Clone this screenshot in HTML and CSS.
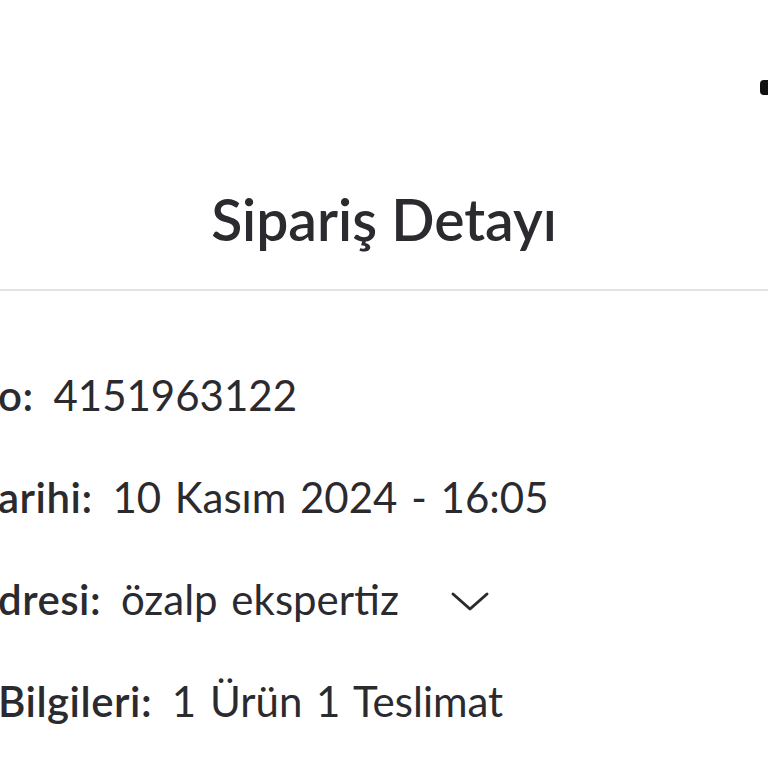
FILE: index.html
```html
<!DOCTYPE html>
<html>
<head>
    <meta charset="utf-8">
    <link rel="stylesheet" href="styles.css">
    <title>Sipariş Detayı</title>
</head>
<body>
    <div class="topbar">
        <div class="close-mark"></div>
    </div>

    <p class="title">Sipariş Detayı</p>

    <div class="divider"></div>

    <!-- order info rows, the page is cut at the left edge -->
    <div class="info">
        <p class="row"><span class="label">o:</span> 4151963122</p>
        <p class="row"><span class="label">arihi:</span> 10 Kasım 2024 - 16:05</p>
        <p class="row"><span class="label">dresi:</span> özalp ekspertiz
            <svg class="chevron" width="40" height="22" viewBox="0 0 40 22">
                <path d="M3 3 L20 18 L37 3" fill="none" stroke="#2b2b2f" stroke-width="3" stroke-linecap="round" stroke-linejoin="round"/>
            </svg>
        </p>
        <p class="row"><span class="label">Bilgileri:</span> 1 Ürün 1 Teslimat</p>
    </div>
</body>
</html>
```

FILE: styles.css
```css
body{
    margin: 0;
    background-color: white;
    color: #2b2b2f;
    font-family: Lato, "Open Sans", sans-serif;
    overflow: hidden;
}

.topbar{
    display: flex;
    justify-content: flex-end;
    padding-top: 80px;
}

.close-mark{
    width: 8px;
    height: 15px;
    background-color: #111;
    border-radius: 4px 0 0 4px;
}

.title{
    margin: 88px 0 0 0;
    text-align: center;
    font-size: 57px;
    line-height: 72px;
    font-weight: 600;
}

.divider{
    margin-top: 34px;
    height: 2px;
    background-color: #e3e3e3;
}

.info{
    padding-top: 53px;
    margin-left: -2px;
}

.row{
    margin: 0;
    font-size: 42px;
    line-height: 102px;
    word-spacing: 3px;
    white-space: nowrap;
}

.label{
    font-weight: 600;
    letter-spacing: 0.5px;
    margin-right: 6px;
}

.chevron{
    margin-left: 37px;
    vertical-align: 2px;
}
```
